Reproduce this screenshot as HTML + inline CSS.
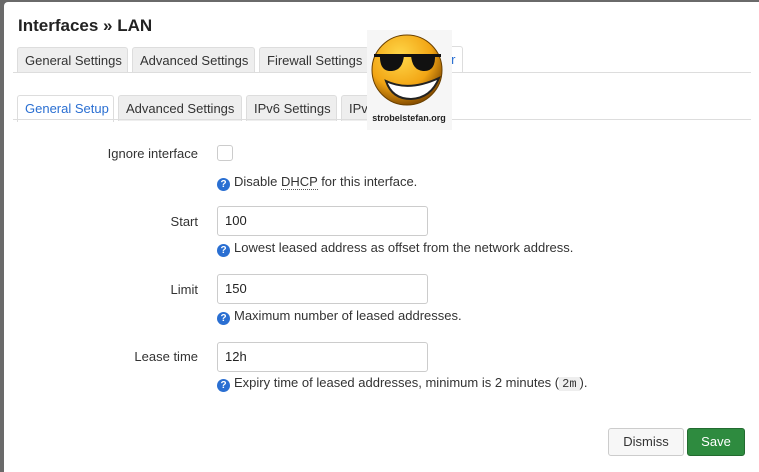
<!DOCTYPE html>
<html><head><meta charset="utf-8"><style>
*{box-sizing:border-box;margin:0;padding:0}
body{width:759px;height:468px;overflow:hidden;background:#6a6a6a;font-family:"Liberation Sans",sans-serif;font-size:13px;color:#333;position:relative}
.modal{position:absolute;left:4px;top:2px;width:760px;height:470px;background:#fff;border-radius:4px 0 0 0}
.abs{position:absolute}
h2{position:absolute;left:18px;top:16px;font-size:17px;font-weight:bold;color:#222}
.tab{position:absolute;height:26px;border:1px solid #ddd;border-bottom:none;background:#eee;border-radius:3px 3px 0 0;font-size:13px;line-height:25px;padding:0 7px;color:#333;white-space:nowrap;overflow:hidden}
.tab.act{background:#fff;color:#2a6fd2;height:27px}
.line{position:absolute;height:1px;background:#ddd}
.lbl{position:absolute;right:561px;font-size:13px;color:#333;text-align:right}
.inp{position:absolute;left:217px;width:211px;height:30px;border:1px solid #ccc;border-radius:3px;padding-left:7px;line-height:28px;font-size:13px;color:#222}
.help{position:absolute;left:217px;font-size:13px;color:#333;white-space:nowrap}
.q{display:inline-block;width:13px;height:13px;border-radius:50%;background:#2a6fd2;color:#fff;font-size:10px;font-weight:bold;text-align:center;line-height:13px;margin-right:4px;vertical-align:-1px}
.btn{position:absolute;height:28px;border-radius:3px;font-size:13px;line-height:26px;text-align:center}
</style></head><body>
<div class="modal"></div>
<h2>Interfaces » LAN</h2>
<div class="tab" style="left:17px;top:47px;width:111px">General Settings</div>
<div class="tab" style="left:132px;top:47px;width:123px">Advanced Settings</div>
<div class="tab" style="left:259px;top:47px;width:110px">Firewall Settings</div>
<div class="tab act" style="left:369px;top:46px;width:94px;text-align:right">DHCP Server</div>
<div class="line" style="left:13px;top:72px;width:738px"></div>
<div class="tab act" style="left:17px;top:95px;width:97px">General Setup</div>
<div class="tab" style="left:118px;top:95px;width:124px">Advanced Settings</div>
<div class="tab" style="left:246px;top:95px;width:91px">IPv6 Settings</div>
<div class="tab" style="left:341px;top:95px;width:110px">IPv6 RA Settings</div>
<div class="line" style="left:13px;top:119px;width:738px"></div>
<div class="abs" style="left:367px;top:30px;width:85px;height:100px;background:#f6f6f6">
<svg width="85" height="100" viewBox="0 0 85 100">
<defs><radialGradient id="g" cx="40%" cy="30%" r="70%"><stop offset="0" stop-color="#ffd84a"/><stop offset="0.65" stop-color="#f2a514"/><stop offset="1" stop-color="#8a5000"/></radialGradient></defs>
<circle cx="40" cy="40" r="35" fill="url(#g)" stroke="#6a4000" stroke-width="1"/>
<path d="M7 24 L74 24 L74 27 L7 27 Z" fill="#111"/>
<path d="M13 24 Q12 42 25 41 Q36 40 37 25 Z" fill="#111"/>
<path d="M44 25 Q45 40 56 41 Q69 42 68 24 Z" fill="#111"/>
<path d="M19 51 Q42 62 72 48 Q64 68 44 69 Q25 69 19 51 Z" fill="#fff" stroke="#222" stroke-width="2"/>
<text x="42" y="91" font-size="9" font-family="Liberation Sans,sans-serif" font-weight="bold" fill="#222" text-anchor="middle">strobelstefan.org</text>
</svg></div>
<div class="lbl" style="top:146px">Ignore interface</div>
<div class="abs" style="left:217px;top:145px;width:16px;height:16px;border:1px solid #ccc;border-radius:3px"></div>
<div class="help" style="top:174px"><span class="q">?</span>Disable <span style="border-bottom:1px dotted #555">DHCP</span> for this interface.</div>
<div class="lbl" style="top:214px">Start</div>
<div class="inp" style="top:206px">100</div>
<div class="help" style="top:240px"><span class="q">?</span>Lowest leased address as offset from the network address.</div>
<div class="lbl" style="top:282px">Limit</div>
<div class="inp" style="top:274px">150</div>
<div class="help" style="top:308px"><span class="q">?</span>Maximum number of leased addresses.</div>
<div class="lbl" style="top:349px">Lease time</div>
<div class="inp" style="top:342px">12h</div>
<div class="help" style="top:375px"><span class="q">?</span>Expiry time of leased addresses, minimum is 2 minutes (<span style="font-family:'Liberation Mono',monospace;background:#eee;padding:0 3px;font-size:12px">2m</span>).</div>
<div class="btn" style="left:608px;top:428px;width:76px;border:1px solid #ccc;background:#f7f7f7;color:#333">Dismiss</div>
<div class="btn" style="left:687px;top:428px;width:58px;border:1px solid #236b30;background:#2e8b3f;color:#fff">Save</div>
</body></html>
